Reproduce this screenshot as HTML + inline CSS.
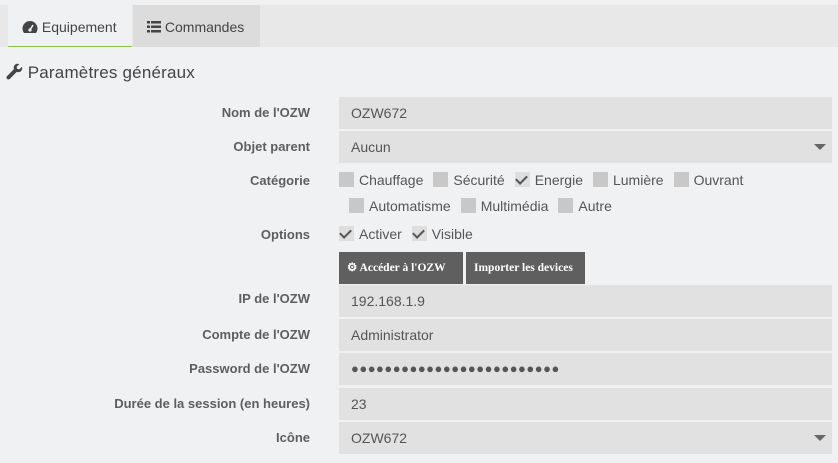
<!DOCTYPE html>
<html><head><meta charset="utf-8"><style>
*{box-sizing:border-box;margin:0;padding:0}
body{width:838px;height:463px;background:#f0f1f2;font-family:"Liberation Sans",sans-serif;font-size:14px;color:#555;position:relative;overflow:hidden}
.a{position:absolute}
.bar{left:0;top:5px;width:838px;height:42px;background:#e8e8e8}
.tab{top:5px;height:42px;line-height:44px;font-size:14px;color:#444;padding-left:14px;white-space:nowrap}
.lbl{right:528px;font-weight:bold;color:#5e5e5e;font-size:13px;text-align:right;white-space:nowrap}
.inp{left:339px;width:493px;height:32px;background:#e0e1e0;color:#555;font-size:14px;line-height:32px;padding-left:12px;white-space:nowrap}
.caret{position:absolute;right:6px;top:13px;width:0;height:0;border-left:6px solid transparent;border-right:6px solid transparent;border-top:6px solid #666}
.cb{display:inline-block;width:15px;height:15px;background:#c8c8c8;vertical-align:-2px;margin-right:5px;position:relative}
.cb.on{background:#dedede}
.cb.on:after{content:"";position:absolute;left:3px;top:1px;width:5px;height:9px;border:solid #555;border-width:0 2.5px 2.5px 0;transform:rotate(45deg)}
.row{left:339px;white-space:nowrap;font-size:14px;color:#555}
.row span.t{margin-right:10px}
.btn{top:252px;height:32px;background:#5f5f5f;color:#fff;font-family:"Liberation Serif",serif;font-weight:bold;font-size:11.5px;line-height:32px;padding:0 0 0 8px;white-space:nowrap;overflow:hidden}
</style></head><body>
<div class="a bar"></div>
<div class="a tab" style="left:8px;width:124px;background:#f0f1f2;border-bottom:1px solid #8bc34a">
<svg width="16" height="14" viewBox="0 0 16 14" style="vertical-align:-2px"><path d="M8 1A7.5 7.5 0 0 0 0.5 8.5c0 1.8.6 3.4 1.6 4.5h11.8c1-1.1 1.6-2.7 1.6-4.5A7.5 7.5 0 0 0 8 1z" fill="#444"/><circle cx="8" cy="10" r="1.6" fill="#f0f1f2"/><path d="M8 10L11 5" stroke="#f0f1f2" stroke-width="1.5"/></svg> Equipement</div>
<div class="a tab" style="left:133px;width:127px;background:#dcdcdc">
<svg width="14" height="12" viewBox="0 0 14 12" style="vertical-align:-1px"><rect x="0" y="0" width="3" height="2.5" fill="#444"/><rect x="4" y="0" width="10" height="2.5" fill="#444"/><rect x="0" y="4.5" width="3" height="2.5" fill="#444"/><rect x="4" y="4.5" width="10" height="2.5" fill="#444"/><rect x="0" y="9" width="3" height="2.5" fill="#444"/><rect x="4" y="9" width="10" height="2.5" fill="#444"/></svg> Commandes</div>
<div class="a" style="left:6px;top:63px;font-size:17px;color:#444;white-space:nowrap">
<svg width="17" height="17" viewBox="0 0 16 16" style="vertical-align:-2px"><path d="M15 3.5l-2.5 2.5-2-.5-.5-2L12.5 1C10.5.3 8.3 1 7.5 3c-.4 1-.3 2 0 2.8L1 12.3c-.8.8-.8 1.9 0 2.6s1.8.8 2.6 0l6.5-6.5c.9.3 1.9.4 2.8 0 2-.8 2.7-3 2.1-4.9z" fill="#444"/></svg> <span style="letter-spacing:0.2px">Paramètres généraux</span></div>

<div class="a lbl" style="top:105px">Nom de l'OZW</div>
<div class="a inp" style="top:97px">OZW672</div>
<div class="a lbl" style="top:139px">Objet parent</div>
<div class="a inp" style="top:131px">Aucun<div class="caret"></div></div>
<div class="a lbl" style="top:173px">Catégorie</div>
<div class="a row" style="top:172px"><span class="cb"></span><span class="t">Chauffage</span><span class="cb"></span><span class="t">Sécurité</span><span class="cb on"></span><span class="t">Energie</span><span class="cb"></span><span class="t">Lumière</span><span class="cb"></span><span class="t">Ouvrant</span></div>
<div class="a row" style="top:198px;left:349px"><span class="cb"></span><span class="t">Automatisme</span><span class="cb"></span><span class="t">Multimédia</span><span class="cb"></span><span class="t">Autre</span></div>
<div class="a lbl" style="top:227px">Options</div>
<div class="a row" style="top:226px"><span class="cb on"></span><span class="t">Activer</span><span class="cb on"></span><span class="t">Visible</span></div>
<div class="a btn" style="left:339px;width:124px">⚙ Accéder à l'OZW</div>
<div class="a btn" style="left:466px;width:119px">Importer les devices</div>
<div class="a lbl" style="top:291px">IP de l'OZW</div>
<div class="a inp" style="top:285px">192.168.1.9</div>
<div class="a lbl" style="top:327px">Compte de l'OZW</div>
<div class="a inp" style="top:319px">Administrator</div>
<div class="a lbl" style="top:361px">Password de l'OZW</div>
<div class="a inp" style="top:353px;font-size:13px;letter-spacing:0.5px">●●●●●●●●●●●●●●●●●●●●●●●●●</div>
<div class="a lbl" style="top:396px">Durée de la session (en heures)</div>
<div class="a inp" style="top:388px">23</div>
<div class="a lbl" style="top:430px">Icône</div>
<div class="a inp" style="top:422px">OZW672<div class="caret"></div></div>
</body></html>
